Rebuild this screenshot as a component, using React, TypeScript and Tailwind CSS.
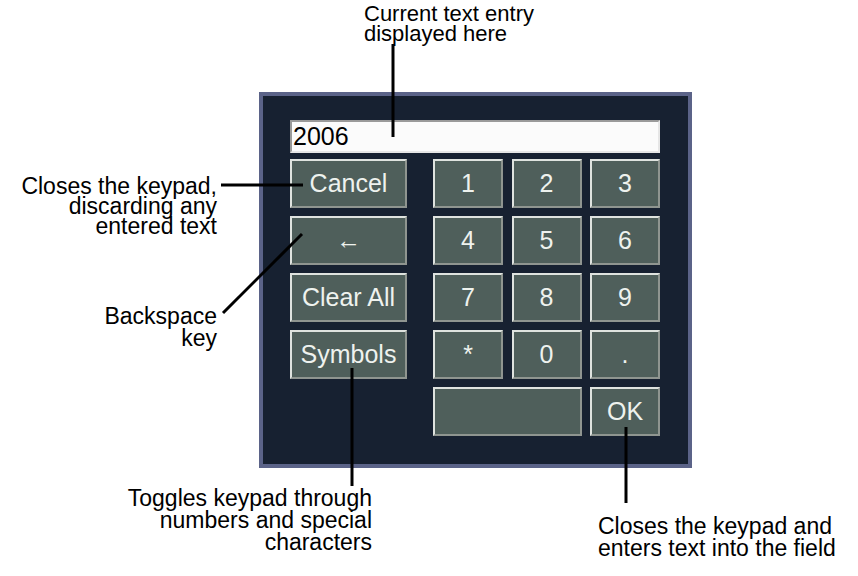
import React from 'react'

const btn =
  'flex items-center justify-center h-[49px] bg-[#4f5f5b] border-2 border-t-[#dfe3df] border-l-[#dfe3df] border-r-[#8f9590] border-b-[#8f9590] text-[#eef2ee] text-[25px] leading-none'

const sideKeys = ['Cancel', '←', 'Clear All', 'Symbols']
const numKeys = ['1', '2', '3', '4', '5', '6', '7', '8', '9', '*', '0', '.']

const Keypad: React.FC = () => (
  <div className="w-[433px] h-[376px] border-4 border-[#5b6388] bg-[#172131] pl-[27px] pt-[24px]">
    {/* text entry */}
    <div className="w-[370px] h-[33px] bg-[#fbfbfb] border-2 border-t-[#9a9a9a] border-l-[#9a9a9a] border-b-[#e6e6e6] border-r-[#e6e6e6] flex items-center pl-[1px] text-[25px] text-black leading-none">
      2006
    </div>

    <div className="flex mt-[6px]">
      <div className="w-[117px] flex flex-col gap-[8px]">
        {sideKeys.map((k) => (
          <div className={btn} key={k}>
            {k}
          </div>
        ))}
      </div>

      <div className="ml-[26px] grid grid-cols-[70px_70px_70px] gap-x-[8.5px] gap-y-[8px]">
        {numKeys.map((k) => (
          <div className={btn} key={k}>
            {k}
          </div>
        ))}
        <div className={`${btn} col-span-2`} />
        <div className={btn}>OK</div>
      </div>
    </div>
  </div>
)

export default function App() {
  return (
    <div
      className="relative w-[858px] h-[576px] bg-white overflow-hidden"
      style={{ fontFamily: '"Liberation Sans", Arial, sans-serif' }}
    >
      <div className="pt-[92px] pl-[259px]">
        <Keypad />
      </div>

      {/* callout labels */}
      <div className="absolute left-[364px] top-[4px] text-[22px] leading-[20px] text-black">
        <div>Current text entry</div>
        <div>displayed here</div>
      </div>

      <div className="absolute right-[641px] top-[176px] text-[23px] leading-[20px] text-black text-right">
        <div>Closes the keypad,</div>
        <div>discarding any</div>
        <div>entered text</div>
      </div>

      <div className="absolute right-[641px] top-[305px] text-[23px] leading-[22px] text-black text-right">
        <div>Backspace</div>
        <div>key</div>
      </div>

      <div className="absolute right-[486px] top-[487px] text-[23px] leading-[22px] text-black text-right">
        <div>Toggles keypad through</div>
        <div>numbers and special</div>
        <div>characters</div>
      </div>

      <div className="absolute left-[598px] top-[515px] text-[23px] leading-[22px] text-black">
        <div>Closes the keypad and</div>
        <div>enters text into the field</div>
      </div>

      {/* leader lines */}
      <svg className="absolute inset-0 pointer-events-none" width="858" height="576">
        <g stroke="#000" strokeWidth="3" fill="none">
          <line x1="393" y1="44" x2="393" y2="137" />
          <line x1="221" y1="185" x2="303" y2="185" />
          <line x1="223" y1="313" x2="302" y2="234" />
          <line x1="352" y1="368" x2="352" y2="486" />
          <line x1="626" y1="427" x2="626" y2="503" />
        </g>
      </svg>
    </div>
  )
}
